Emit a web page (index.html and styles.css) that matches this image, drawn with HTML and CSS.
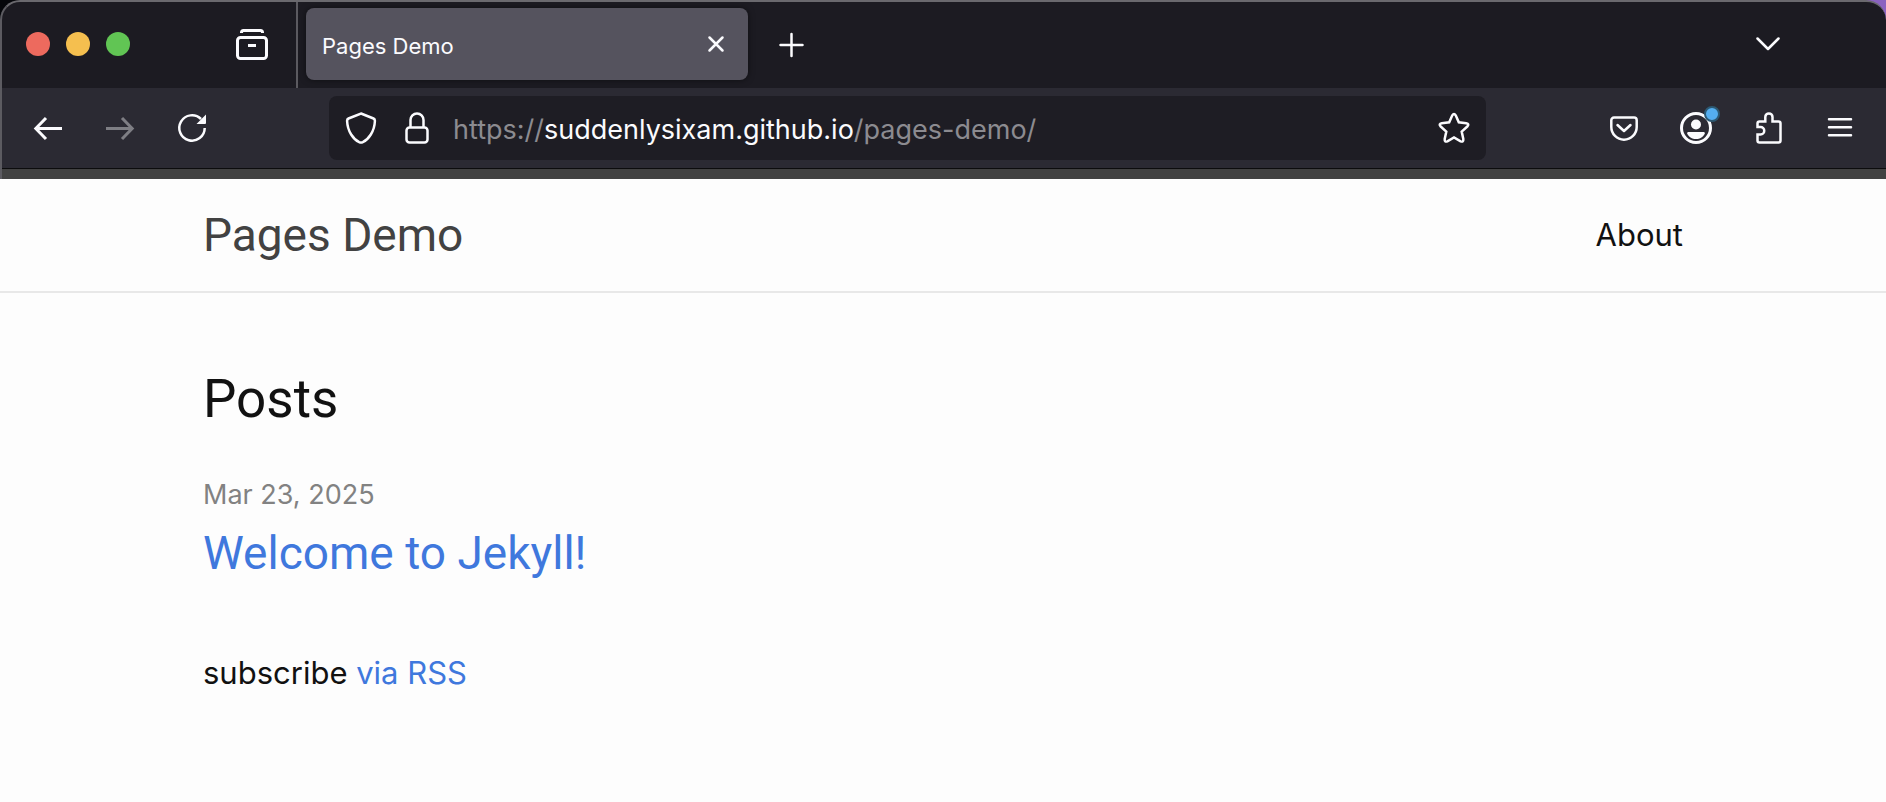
FILE: index.html
```html
<!DOCTYPE html>
<html lang="en">
<head>
<meta charset="utf-8">
<title>Pages Demo</title>
<link rel="stylesheet" href="styles.css">
</head>
<body>
<div class="desktop">
  <div class="browser">
    <div class="tab-strip">
      <div class="strip-start">
        <div class="lights">
          <button class="light light-close" aria-label="Close window"></button>
          <button class="light light-minimize" aria-label="Minimize window"></button>
          <button class="light light-zoom" aria-label="Zoom window"></button>
        </div>
        <button class="icon-button" aria-label="Firefox View">
          <svg class="icon" viewBox="0 0 32 32"><path d="M5.5 5V4.5Q5.5 2.500 7.500 2.500H24.500Q26.500 2.500 26.500 4.500V5"/><rect x="1.500" y="9.500" width="29" height="21" rx="3"/><path d="M12 17.500h8"/></svg>
        </button>
      </div>
      <div class="tab">
        <span class="tab-title">Pages Demo</span>
        <button class="tab-close" aria-label="Close tab">
          <svg class="icon" viewBox="0 0 32 32"><path class="round thin" d="M9.500 9.500 22.500 22.500M22.500 9.500 9.500 22.500"/></svg>
        </button>
      </div>
      <button class="icon-button new-tab" aria-label="New tab">
        <svg class="icon" viewBox="0 0 32 32"><path class="round thin" d="M16.500 6V28M5.500 17H27.500"/></svg>
      </button>
      <button class="icon-button all-tabs" aria-label="List all tabs">
        <svg class="icon" viewBox="0 0 32 32"><path class="round thin" d="M5.500 10.500 16 21 26.500 10.500"/></svg>
      </button>
    </div>
    <div class="toolbar">
      <button class="icon-button" aria-label="Back">
        <svg class="icon" viewBox="0 0 32 32"><path d="M30 16.500H4M14 6 3.800 16.500 14 27"/></svg>
      </button>
      <button class="icon-button" aria-label="Forward" disabled>
        <svg class="icon" viewBox="0 0 32 32"><path d="M2 16.500H28M18 6 28.200 16.500 18 27"/></svg>
      </button>
      <button class="icon-button" aria-label="Reload">
        <svg class="icon" viewBox="0 0 32 32"><path class="thin" d="M28.700 16A12.700 12.700 0 1 1 25 7"/><path class="solid" d="M30 2.500V11a1 1 0 0 1-1 1H20.500z"/></svg>
      </button>
      <div class="url-bar">
        <button class="url-button" aria-label="Tracking protection">
          <svg class="icon" viewBox="0 0 32 32"><path class="thin" d="M16 1.500 28.500 6.500Q30 7.200 29.900 9C29.500 19.500 23.500 27.500 17.800 30.200Q16 31 14.200 30.200C8.500 27.500 2.500 19.500 2.100 9Q2 7.200 3.500 6.500z"/></svg>
        </button>
        <button class="url-button" aria-label="Site information">
          <svg class="icon" viewBox="0 0 32 32"><rect class="thin" x="5.500" y="15.500" width="21" height="15" rx="3"/><path class="thin" d="M9.500 15V8a6.500 6.500 0 0 1 13 0V15"/></svg>
        </button>
        <div class="url-text" role="textbox" aria-label="Address" contenteditable="true" spellcheck="false">https://<span class="url-host">suddenlysixam.github.io</span>/pages-demo/</div>
        <button class="url-button" aria-label="Bookmark this page">
          <svg class="icon" viewBox="0 0 32 32"><path class="thin" d="M14.300 3.300Q16 .5 17.700 3.300L20.800 10.300 28.200 11.200Q31.800 12 29.300 14.500L23.700 19.600 25.300 27Q25.600 30.500 22.600 29.300L16 25.500 9.400 29.300Q6.400 30.500 6.700 27L8.300 19.600 2.700 14.500Q.2 12 3.800 11.200L11.200 10.300z"/></svg>
        </button>
      </div>
      <button class="icon-button" aria-label="Save to Pocket">
        <svg class="icon" viewBox="0 0 32 32"><path class="thin" d="M6 5.500H26A2.700 2.700 0 0 1 28.700 8.200V15A12.700 12.700 0 0 1 3.300 15V8.200A2.700 2.700 0 0 1 6 5.500z"/><path class="round thin" d="M9.500 13 16 19 22.500 13"/></svg>
      </button>
      <button class="icon-button" aria-label="Account">
        <svg class="icon" viewBox="0 0 32 32"><circle cx="16" cy="16" r="14.500"/><circle class="solid" cx="16" cy="12.500" r="5"/><path class="solid" d="M8.300 20H23.700Q25.300 20 24.800 21.500C23.500 25 20 27 16 27S8.500 25 7.200 21.500Q6.700 20 8.300 20z"/></svg>
        <span class="notice-dot"></span>
      </button>
      <button class="icon-button" aria-label="Extensions">
        <svg class="icon" viewBox="0 0 32 32"><path class="thin" d="M5.500 15V11.500Q5.500 9.500 7.500 9.500H13.300V5a3.600 3.600 0 0 1 7.200 0V9.500H26.500Q28.500 9.500 28.500 11.500V28.500Q28.500 30.500 26.500 30.500H7.500Q5.500 30.500 5.500 28.500V22.500H8.500a3.750 3.750 0 0 0 0-7.500z"/></svg>
      </button>
      <button class="icon-button" aria-label="Open application menu">
        <svg class="icon" viewBox="0 0 32 32"><path class="thin round" d="M5 7.300H27M5 15.300H27M5 23.300H27"/></svg>
      </button>
    </div>
    <div class="page-edge"></div>
  </div>
</div>
<div class="page">
  <header class="site-header">
    <div class="wrapper header-row">
      <a class="site-title" href="#">Pages Demo</a>
      <nav><a class="page-link" href="#">About</a></nav>
    </div>
  </header>
  <main class="wrapper content">
    <h1 class="list-heading">Posts</h1>
    <ul class="post-list">
      <li>
        <time class="post-meta" datetime="2025-03-23">Mar 23, 2025</time>
        <h2 class="post-title"><a class="link" href="#">Welcome to Jekyll!</a></h2>
      </li>
    </ul>
    <p class="subscribe">subscribe <a class="link" href="#">via RSS</a></p>
  </main>
</div>
</body>
</html>
```
FILE: styles.css
```css
* {
  box-sizing: border-box;
}

body {
  margin: 0;
  background: #fdfdfd;
  color: #111;
  font: 31px/48px Inter, "Liberation Sans", sans-serif;
}

button {
  margin: 0;
  padding: 0;
  border: 0;
  background: none;
  color: #fbfbfe;
}

a {
  text-decoration: none;
}

.desktop {
  background: linear-gradient(90deg, #05060a 50%, #8a63c0 50%);
}

.browser {
  border-top: 2px solid #6a696e;
  border-left: 2px solid #5c5b61;
  border-radius: 20px 20px 0 0;
  background: #1c1b22;
  overflow: hidden;
}

.tab-strip {
  display: flex;
  align-items: center;
  height: 86px;
  padding: 0 82px 2px 0;
}

.strip-start {
  display: flex;
  flex: none;
  align-items: center;
  align-self: flex-start;
  justify-content: space-between;
  width: 296px;
  height: 86px;
  padding: 0 8px 2px 24px;
  border-right: 2px solid #5b5a60;
}

.lights {
  display: flex;
  gap: 16px;
}

.light {
  width: 24px;
  height: 24px;
  border-radius: 50%;
}

.light-close {
  background: #ed6a5e;
}

.light-minimize {
  background: #f5bf4f;
}

.light-zoom {
  background: #61c554;
}

.icon {
  display: block;
  width: 32px;
  height: 32px;
  fill: none;
  stroke: currentColor;
  stroke-width: 3;
}

.icon .thin {
  stroke-width: 2.5;
}

.icon .round {
  stroke-linecap: round;
  stroke-linejoin: round;
}

.icon .solid {
  fill: currentColor;
  stroke: none;
}

.icon-button {
  display: flex;
  flex: none;
  align-items: center;
  justify-content: center;
  position: relative;
  width: 72px;
  height: 64px;
}

.icon-button:disabled {
  opacity: 0.4;
}

.tab {
  display: flex;
  align-items: center;
  justify-content: space-between;
  width: 442px;
  max-width: 30%;
  height: 72px;
  margin-left: 8px;
  padding: 0 16px;
  border-radius: 8px;
  background: #55535e;
  box-shadow: 0 0 6px rgba(0, 0, 0, 0.5);
}

.tab-title {
  padding-top: 4px;
  color: #fbfbfe;
  font-size: 22px;
  line-height: 32px;
}

.new-tab {
  margin-left: 7px;
}

.all-tabs {
  margin-left: auto;
}

.toolbar {
  display: flex;
  align-items: center;
  height: 81px;
  padding: 0 10px;
  border-bottom: 1px solid #0c0c0d;
  background: #2b2a33;
}

.url-bar {
  display: flex;
  flex: 1;
  align-items: center;
  min-width: 0;
  height: 64px;
  margin: 0 102px 0 101px;
  padding: 0 16px;
  border-radius: 8px;
  background: #1e1d24;
}

.url-button {
  flex: none;
}

.url-button + .url-button {
  margin-left: 24px;
}

.url-text {
  flex: 1;
  min-width: 0;
  margin-left: 20px;
  padding-top: 3px;
  overflow: hidden;
  color: #8c8b90;
  font-size: 27px;
  line-height: 40px;
  white-space: nowrap;
}

.url-host {
  color: #fbfbfe;
}

.notice-dot {
  position: absolute;
  top: 10px;
  right: 12px;
  width: 16px;
  height: 16px;
  border: 2px solid #2c5872;
  border-radius: 50%;
  background: #54aef0;
}

.page-edge {
  height: 10px;
  background: #424242;
}

.wrapper {
  max-width: 1600px;
  margin: 0 auto;
  padding: 0 60px;
}

.site-header {
  border-bottom: 2px solid #e8e8e8;
}

.header-row {
  display: flex;
  align-items: center;
  justify-content: space-between;
  min-height: 112px;
}

.site-title,
.list-heading,
.post-title {
  font-family: Roboto, Inter, "Liberation Sans", sans-serif;
  font-weight: 400;
}

.site-title {
  color: #424242;
  font-size: 46px;
  line-height: 112px;
}

.page-link {
  color: #111;
}

.content {
  padding-top: 64px;
  padding-bottom: 60px;
}

.list-heading {
  margin: 0 0 32px;
  font-size: 53px;
  line-height: 84px;
}

.post-list {
  margin: 0 0 60px;
  padding: 0;
  list-style: none;
}

.post-meta {
  display: block;
  color: #828282;
  font-size: 27px;
  line-height: 44px;
}

.post-title {
  margin: 0;
  font-size: 46px;
  line-height: 72px;
}

.link {
  color: #3f78dd;
}

.subscribe {
  margin: 0;
}
```
